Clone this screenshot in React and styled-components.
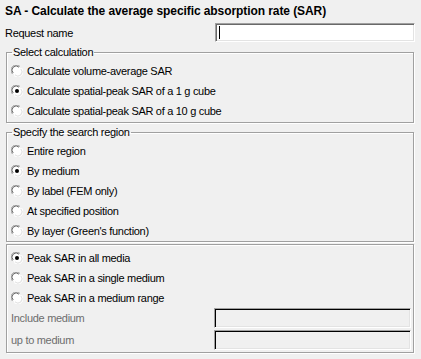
import React from 'react';
import styled, { createGlobalStyle } from 'styled-components';

const Global = createGlobalStyle`
  html, body {
    margin: 0;
    padding: 0;
    background: #f0f0f0;
  }
  body {
    font-family: "Liberation Sans", Arial, sans-serif;
    font-size: 11px;
    letter-spacing: -0.3px;
    color: #000;
  }
`;

const Page = styled.div`
  width: 421px;
  height: 359px;
  box-sizing: border-box;
  padding: 3px 6px 0 6px;
  display: flex;
  flex-direction: column;
`;

const Title = styled.div`
  font-weight: bold;
  font-size: 12px;
  letter-spacing: -0.08px;
  line-height: 16px;
  margin-left: -1px;
`;

const FieldRow = styled.div`
  display: flex;
  align-items: center;
  justify-content: space-between;
  height: ${p => p.$h ?? 20}px;
  margin-top: ${p => p.$mt ?? 0}px;
`;

const Label = styled.span`
  color: ${p => (p.$disabled ? '#6d6d6d' : '#000')};
  margin-left: ${p => p.$ml ?? 0}px;
`;

const TextBox = styled.div`
  box-sizing: border-box;
  width: ${p => p.$w}px;
  height: ${p => p.$h ?? 19}px;
  background: ${p => (p.$disabled ? '#f0f0f0' : '#fff')};
  border-top: 1px solid #a0a0a0;
  border-left: 1px solid #a0a0a0;
  border-bottom: 1px solid #fff;
  border-right: 1px solid #fff;
  box-shadow: inset 1px 1px 0 ${p => (p.$disabled ? '#000' : '#696969')},
    inset -1px -1px 0 #e3e3e3;
  display: flex;
  align-items: center;
  padding-left: 3px;
`;

const Caret = styled.span`
  display: inline-block;
  width: 1px;
  height: 13px;
  background: #000;
`;

const Group = styled.fieldset`
  margin: ${p => p.$mt ?? 0}px 0 0 0;
  padding: ${p => p.$pt ?? 2}px 2px ${p => p.$pb ?? 1}px 4px;
  border: 1px solid #a0a0a0;
  box-shadow: inset 1px 1px 0 #fff, 1px 1px 0 #fff;
  min-width: 0;
  width: 408px;
  box-sizing: border-box;
`;

const Legend = styled.legend`
  padding: 0 1px;
  margin-left: 1px;
  line-height: 14px;
`;

const Option = styled.label`
  display: flex;
  align-items: center;
  height: 20px;
  gap: 4px;
`;

function Radio({ checked }) {
  return (
    <svg width="12" height="12" viewBox="0 0 12 12">
      <path d="M1.5 9 A5 5 0 0 1 9 1.5" fill="none" stroke="#a0a0a0" />
      <path d="M10.5 3 A5 5 0 0 1 3 10.5" fill="none" stroke="#fff" />
      <circle cx="6" cy="6" r="4.5" fill="#fff" />
      <path d="M2.2 8 A4 4 0 0 1 8 2.2" fill="none" stroke="#696969" />
      <path d="M9.8 4 A4 4 0 0 1 4 9.8" fill="none" stroke="#e3e3e3" />
      {checked && <circle cx="6" cy="6" r="2" fill="#000" />}
    </svg>
  );
}

function RadioOption({ checked, children }) {
  return (
    <Option>
      <Radio checked={checked} />
      <span>{children}</span>
    </Option>
  );
}

export default function App() {
  return (
    <>
      <Global />
      <Page>
        <Title>SA - Calculate the average specific absorption rate (SAR)</Title>
        <FieldRow $h={19} $mt={4}>
          <Label $ml={-1}>Request name</Label>
          <TextBox $w={200}>
            <Caret />
          </TextBox>
        </FieldRow>

        <Group $mt={3}>
          <Legend>Select calculation</Legend>
          <RadioOption>Calculate volume-average SAR</RadioOption>
          <RadioOption checked>Calculate spatial-peak SAR of a 1 g cube</RadioOption>
          <RadioOption>Calculate spatial-peak SAR of a 10 g cube</RadioOption>
        </Group>

        <Group $mt={2} $pb={0}>
          <Legend>Specify the search region</Legend>
          <RadioOption>Entire region</RadioOption>
          <RadioOption checked>By medium</RadioOption>
          <RadioOption>By label (FEM only)</RadioOption>
          <RadioOption>At specified position</RadioOption>
          <RadioOption>By layer (Green's function)</RadioOption>
        </Group>

        <Group $mt={2} $pt={3} $pb={2}>
          <RadioOption checked>Peak SAR in all media</RadioOption>
          <RadioOption>Peak SAR in a single medium</RadioOption>
          <RadioOption>Peak SAR in a medium range</RadioOption>
          <FieldRow $h={20}>
            <Label $disabled>Include medium</Label>
            <TextBox $disabled $w={197} $h={20} />
          </FieldRow>
          <FieldRow $h={20} $mt={2}>
            <Label $disabled>up to medium</Label>
            <TextBox $disabled $w={197} $h={20} />
          </FieldRow>
        </Group>
      </Page>
    </>
  );
}
